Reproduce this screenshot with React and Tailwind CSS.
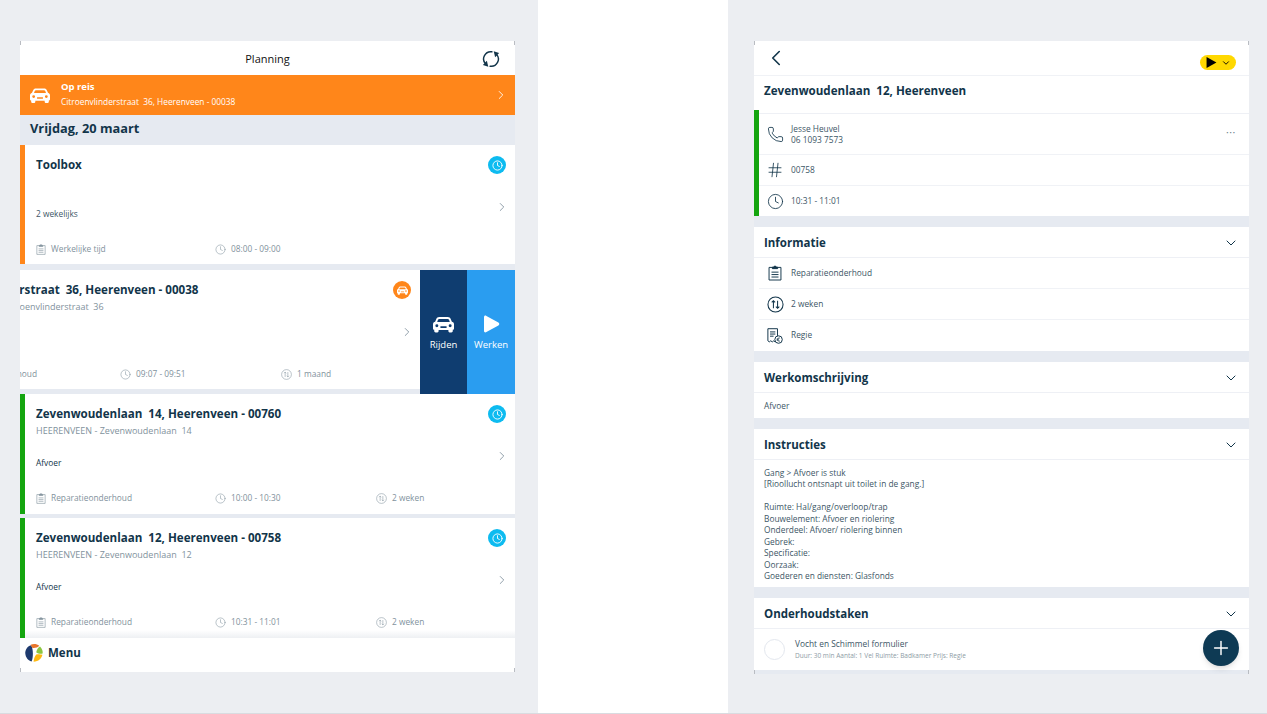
import { ChevronDown, ChevronLeft, ChevronRight, Clock, Hash, Phone, Plus } from "lucide-react";

const Car = ({ className }) => (
  <svg viewBox="0 0 24 18" className={className} fill="currentColor" fillRule="evenodd">
    <path d="M7 .5H17C18.5.5 19.6 1.3 20.2 2.6L21.6 5.8L23 6.5C23.6 7 24 7.8 24 8.6V13.5C24 14.3 23.5 15 22.6 15V16.5C22.6 17.3 22 18 21 18H19C18.2 18 17.6 17.3 17.6 16.5V15.2H6.4V16.5C6.4 17.3 5.8 18 5 18H3C2 18 1.4 17.3 1.4 16.5V15C.5 15 0 14.3 0 13.5V8.6C0 7.8.4 7 1 6.5L2.4 5.8L3.8 2.6C4.4 1.3 5.5.5 7 .5ZM7.2 2.6H16.8C17.5 2.6 18 3 18.3 3.6L19.2 6H4.8L5.7 3.6C6 3 6.5 2.6 7.2 2.6ZM4.4 8.6A1.7 1.7 0 1 0 4.4 12A1.7 1.7 0 1 0 4.4 8.6ZM19.6 8.6A1.7 1.7 0 1 0 19.6 12A1.7 1.7 0 1 0 19.6 8.6ZM8.5 11H15.5V13H8.5Z" />
  </svg>
);

const Sync = ({ className }) => (
  <svg viewBox="0 0 20 20" className={className} fill="none" stroke="currentColor" strokeWidth="1.6" strokeLinecap="round">
    <path d="M11 2A8 8 0 0 0 4 15.4" />
    <path d="M9 18A8 8 0 0 0 16 4.6" />
    <path d="M13 1.4L19 3.4L14.6 8Z" fill="currentColor" stroke="none" />
    <path d="M7 18.6L1 16.6L5.4 12Z" fill="currentColor" stroke="none" />
  </svg>
);

const Clipboard = ({ className, sw = 1.3 }) => (
  <svg viewBox="0 0 16 18" className={className} fill="none" stroke="currentColor" strokeWidth={sw}>
    <path d="M5 2.6H1.2V17H14.8V2.6H11" />
    <path d="M5 4V2.2H6.8C6.9 .6 9.1 .6 9.2 2.2H11V4Z" fill="currentColor" />
    <path d="M4 8H12M4 10.8H12M4 13.6H12" />
  </svg>
);

const Interval = ({ className, sw = 1.1 }) => (
  <svg viewBox="0 0 18 18" className={className} fill="none" stroke="currentColor" strokeWidth={sw}>
    <circle cx="9" cy="9" r="8" />
    <path d="M6.8 13V5M5 6.8L6.8 5L8.6 6.8M11.2 5V13M9.4 11.2L11.2 13L13 11.2" />
  </svg>
);

const Receipt = ({ className }) => (
  <svg viewBox="0 0 18 18" className={className} fill="none" stroke="currentColor" strokeWidth="1.1">
    <path d="M9 15.5L7.6 14.4L6 15.6L4.2 14.4L2.6 15.6L1 14.4V.8H11.8V9" />
    <path d="M3.4 4.4H9.4M3.4 6.8H9.4M3.4 9.2H7.4" />
    <circle cx="13" cy="13" r="4.2" fill="#fff" />
    <path d="M14.6 11.4C13 10.6 11.8 11.6 11.8 13C11.8 14.4 13 15.4 14.6 14.6M10.8 12.4H13.4M10.8 13.6H13.4" strokeWidth=".8" />
  </svg>
);

const Logo = () => (
  <svg viewBox="0 0 18 18" className="w-[18px] h-[18px]">
    <path d="M6.2 1.2C1.8 2.4 0 6.4.3 9.6C.6 13.2 2.8 16.6 6.6 17.4C8.4 13.8 8.4 5.4 6.2 1.2Z" fill="#1e3a6e" />
    <path d="M5.6.8C8.4-.4 12-.2 14.2 1.8C12.8 3.6 9.4 4.4 7.2 3.8C6.6 3 6.2 1.8 5.6.8Z" fill="#e8762c" />
    <path d="M15 2.4C17.2 4.4 18 7.4 17.6 9.6C15.6 10.2 12.8 9.6 11.2 8.2C11.8 5.8 13 3.4 15 2.4Z" fill="#8cc63f" />
    <path d="M17.4 10.8C16.8 14.4 13.4 17.6 8.6 17.8C8.8 15.6 9.4 12.8 11.2 10.6C13 10 15.6 10 17.4 10.8Z" fill="#fdb913" />
  </svg>
);

// small grey ticks left by the screen's rounded corners
const Corners = () => (
  <>
    <span className="absolute left-0 top-0 w-px h-[4px] bg-[#b9bcc2]" />
    <span className="absolute right-0 top-0 w-px h-[4px] bg-[#b9bcc2]" />
    <span className="absolute left-0 bottom-0 w-px h-[4px] bg-[#b9bcc2]" />
    <span className="absolute right-0 bottom-0 w-px h-[4px] bg-[#b9bcc2]" />
  </>
);

const MetaItem = ({ icon, text, className }) => (
  <div className={`flex items-center gap-[5px] text-[8.35px] text-[#82929d] ${className}`}>
    {icon}
    <span>{text}</span>
  </div>
);

const WorkCard = ({ bar, title, sub, desc, descColor, badge, items, height }) => (
  <div className={`w-[495px] shrink-0 bg-white border-l-[5px] pl-[11px] pr-[9px] pt-[11px] flex flex-col ${bar} ${height}`}>
    <div className="flex items-center justify-between h-[18px]">
      <span className="text-[11.6px] font-bold text-[#12354a] whitespace-pre">{title}</span>
      {badge}
    </div>
    <div className="h-[14px] mt-[1px] leading-[14px] text-[9px] text-[#82929d] whitespace-pre">{sub}</div>
    <div className="flex justify-between h-[32px] mt-[12px]">
      <span className={`text-[8.35px] pt-[7px] leading-[12px] ${descColor}`}>{desc}</span>
      <ChevronRight className="w-[14px] h-[14px] text-[#6f8290] -mr-[3px] -mt-[1px]" strokeWidth={1.3} />
    </div>
    <div className="flex items-center mt-[10px]">{items}</div>
  </div>
);

const ClockBadge = () => (
  <span className="w-[18px] h-[18px] rounded-full bg-[#0dbbf0] flex items-center justify-center text-white">
    <Clock className="w-[11px] h-[11px]" strokeWidth={2} />
  </span>
);

const CarBadge = () => (
  <span className="w-[18px] h-[18px] rounded-full bg-[#ff861a] flex items-center justify-center text-white">
    <Car className="w-[11px] h-[9px]" />
  </span>
);

const metaClock = <Clock className="w-[11px] h-[11px]" strokeWidth={1.2} />;
const metaClip = <Clipboard className="w-[10px] h-[11px]" sw={1} />;
const metaInt = <Interval className="w-[11px] h-[11px]" sw={0.9} />;

const metaRow = (type, time, freq) => (
  <>
    <MetaItem icon={metaClip} text={type} className="w-[179px]" />
    <MetaItem icon={metaClock} text={time} className="w-[161px]" />
    {freq && <MetaItem icon={metaInt} text={freq} />}
  </>
);

const DetailRow = ({ icon, children, height, border = true }) => (
  <div className={`flex items-center pl-[5px] ${height} ${border ? "border-b border-[#f0f2f6]" : ""}`}>
    <span className="w-[22px] flex justify-center text-[#12354a] mr-[5px]">{icon}</span>
    {children}
  </div>
);

const SectionHead = ({ title }) => (
  <div className="flex items-center justify-between h-[31px] pl-[10px] pr-[10px] pt-[1px] border-b border-[#eef0f5]">
    <span className="text-[11.5px] font-bold text-[#12354a]">{title}</span>
    <ChevronDown className="w-[16px] h-[16px] text-[#12354a]" strokeWidth={1.5} />
  </div>
);

const instructies = [
  "Gang > Afvoer is stuk",
  "[Rioollucht ontsnapt uit toilet in de gang.]",
  "\u00a0",
  "Ruimte: Hal/gang/overloop/trap",
  "Bouwelement: Afvoer en riolering",
  "Onderdeel: Afvoer/ riolering binnen",
  "Gebrek:",
  "Specificatie:",
  "Oorzaak:",
  "Goederen en diensten: Glasfonds",
];

const App = () => {
  return (
    <div className="relative w-[1267px] h-[714px] overflow-hidden bg-[#eceef2] border-b border-[#d9dbe0] flex font-['Open_Sans',sans-serif]">
      {/* Planning list */}
      <div className="relative w-[495px] h-[631px] ml-[20px] mt-[41px] shrink-0 bg-[#e6eaf1] flex flex-col overflow-hidden">
        <div className="relative h-[34px] shrink-0 bg-white flex items-center justify-center">
          <span className="text-[11px] font-medium text-[#111] pt-[2px]">Planning</span>
          <Sync className="absolute right-[15px] top-[9px] w-[18px] h-[18px] text-[#12354a]" />
        </div>

        <div className="h-[40px] shrink-0 bg-[#ff861a] text-white flex items-center pl-[10px] pr-[7px]">
          <Car className="w-[20px] h-[15px]" />
          <div className="ml-[11px] flex-1 pb-[2px]">
            <div className="text-[9.5px] font-bold leading-[14px]">Op reis</div>
            <div className="text-[8.35px] leading-[15px] whitespace-pre">Citroenvlinderstraat  36, Heerenveen - 00038</div>
          </div>
          <ChevronRight className="w-[14px] h-[14px]" strokeWidth={1.5} />
        </div>

        <div className="h-[30px] shrink-0 flex items-center pl-[10px] pb-[2px] text-[12.8px] font-bold text-[#12354a]">
          Vrijdag, 20 maart
        </div>

        <WorkCard
          bar="border-[#ff861a]"
          height="h-[119px]"
          title="Toolbox"
          sub=" "
          desc="2 wekelijks"
          descColor="text-[#3c5666]"
          badge={<ClockBadge />}
          items={metaRow("Werkelijke tijd", "08:00 - 09:00")}
        />

        <div className="flex h-[130px] shrink-0 pt-[6px]">
          <div className="-ml-[95px]">
            <WorkCard
              bar="border-[#14a50f]"
              height="h-[119px]"
              title="Citroenvlinderstraat  36, Heerenveen - 00038"
              sub="HEERENVEEN - Citroenvlinderstraat  36"
              desc="Afvoer"
              descColor="text-[#12354a]"
              badge={<CarBadge />}
              items={metaRow("Reparatieonderhoud", "09:07 - 09:51", "1 maand")}
            />
          </div>
          <div className="w-[47px] h-[124px] shrink-0 pt-[4px] bg-[#0f3d70] text-white flex flex-col items-center justify-center gap-[5px] text-[9.5px]">
            <Car className="w-[21px] h-[17px]" />
            <span>Rijden</span>
          </div>
          <div className="w-[48px] h-[124px] shrink-0 pt-[4px] bg-[#2a9df0] text-white flex flex-col items-center justify-center gap-[5px] text-[9.5px]">
            <svg viewBox="0 0 18 18" className="w-[18px] h-[18px]" fill="currentColor">
              <path d="M2 2.2C2 .8 3.2.2 4.4.9L16.4 7.6C17.6 8.3 17.6 9.7 16.4 10.4L4.4 17.1C3.2 17.8 2 17.2 2 15.8Z" />
            </svg>
            <span>Werken</span>
          </div>
        </div>

        <WorkCard
          bar="border-[#14a50f]"
          height="h-[120px]"
          title="Zevenwoudenlaan  14, Heerenveen - 00760"
          sub="HEERENVEEN - Zevenwoudenlaan  14"
          desc="Afvoer"
          descColor="text-[#12354a]"
          badge={<ClockBadge />}
          items={metaRow("Reparatieonderhoud", "10:00 - 10:30", "2 weken")}
        />

        <div className="mt-[4px]">
          <WorkCard
            bar="border-[#14a50f]"
            height="h-[120px]"
            title="Zevenwoudenlaan  12, Heerenveen - 00758"
            sub="HEERENVEEN - Zevenwoudenlaan  12"
            desc="Afvoer"
            descColor="text-[#12354a]"
            badge={<ClockBadge />}
            items={metaRow("Reparatieonderhoud", "10:31 - 11:01", "2 weken")}
          />
        </div>

        <div className="relative h-[34px] shrink-0 bg-white flex items-center pl-[5px] gap-[5px] pb-[7px] pt-[2px]">
          {/* soft fade over the list behind the menu bar */}
          <span className="absolute left-[5px] right-0 -top-[8px] h-[8px] bg-gradient-to-t from-[#eef0f3] to-transparent" />
          <Logo />
          <span className="text-[11.5px] font-bold text-[#12354a]">Menu</span>
        </div>
        <Corners />
      </div>

      {/* White gutter between the two screens */}
      <div className="w-[190px] h-[713px] ml-[23px] shrink-0 bg-white" />

      {/* Work order detail */}
      <div className="relative w-[495px] h-[633px] ml-[26px] mt-[41px] shrink-0 bg-[#e6eaf1] flex flex-col overflow-hidden">
        <div className="h-[35px] shrink-0 bg-white border-b border-[#f0f2f6] flex items-start justify-between pl-[9px] pr-[13px]">
          <ChevronLeft className="w-[26px] h-[26px] mt-[4px] text-[#12354a]" strokeWidth={1.5} />
          <div className="mt-[14px] w-[36px] h-[15px] rounded-full bg-[#ffd800] flex items-center pl-[6px] gap-[4px]">
            <svg viewBox="0 0 10 10" className="w-[11px] h-[11px]"><path d="M.5 0L9.5 5L.5 10Z" fill="#000" /></svg>
            <ChevronDown className="w-[10px] h-[10px] text-black" strokeWidth={2.2} />
          </div>
        </div>

        <div className="h-[34px] shrink-0 bg-white flex items-center pl-[10px] pb-[5px] text-[11.6px] font-bold text-[#12354a] whitespace-pre">
          Zevenwoudenlaan  12, Heerenveen
        </div>

        <div className="shrink-0 bg-white border-l-[5px] border-[#14a50f] pt-[3px] text-[8.35px] text-[#3c5666]">
          <div className="border-t border-[#eef0f5]">
            <DetailRow height="h-[41px]" icon={<Phone className="w-[17px] h-[17px]" strokeWidth={1.2} />}>
              <div className="flex-1 leading-[11.5px]">
                <div>Jesse Heuvel</div>
                <div>06 1093 7573</div>
              </div>
              <span className="mr-[13px] mb-[2px] text-[6px] text-[#6d7f8b] tracking-[1px]">•••</span>
            </DetailRow>
          </div>
          <DetailRow height="h-[31px]" icon={<Hash className="w-[18px] h-[18px]" strokeWidth={1.1} />}>
            <span>00758</span>
          </DetailRow>
          <DetailRow height="h-[30px]" border={false} icon={<Clock className="w-[17px] h-[17px]" strokeWidth={1.2} />}>
            <span>10:31 - 11:01</span>
          </DetailRow>
        </div>

        <div className="mt-[11px] shrink-0 bg-white text-[8.35px] text-[#3c5666]">
          <SectionHead title="Informatie" />
          <div className="pl-[5px]">
            <DetailRow height="h-[31px]" icon={<Clipboard className="w-[14px] h-[16px]" sw={1.1} />}>
              <span>Reparatieonderhoud</span>
            </DetailRow>
            <DetailRow height="h-[31px]" icon={<Interval className="w-[17px] h-[17px]" />}>
              <span>2 weken</span>
            </DetailRow>
            <DetailRow height="h-[31px]" border={false} icon={<Receipt className="w-[16px] h-[16px]" />}>
              <span>Regie</span>
            </DetailRow>
          </div>
        </div>

        <div className="mt-[11px] shrink-0 bg-white text-[8.35px] text-[#3c5666]">
          <SectionHead title="Werkomschrijving" />
          <div className="h-[25px] flex items-center pl-[10px] pt-[1px]">Afvoer</div>
        </div>

        <div className="mt-[11px] shrink-0 bg-white text-[8.35px] text-[#3c5666]">
          <SectionHead title="Instructies" />
          <div className="h-[127px] pl-[10px] pt-[7px] leading-[11.45px]">
            {instructies.map((line, i) => (
              <div key={i}>{line}</div>
            ))}
          </div>
        </div>

        <div className="mt-[11px] shrink-0 bg-white">
          <SectionHead title="Onderhoudstaken" />
          <div className="h-[41px] flex items-center pl-[10px]">
            <span className="w-[21px] h-[21px] rounded-full border border-[#e3e7ee]" />
            <div className="ml-[10px]">
              <div className="text-[8.35px] text-[#3c5666] leading-[12px]">Vocht en Schimmel formulier</div>
              <div className="text-[6.5px] text-[#8d9ba5] leading-[11px]">Duur: 30 min Aantal: 1 Vel Ruimte: Badkamer Prijs: Regie</div>
            </div>
          </div>
        </div>

        {/* Floating add button */}
        <button className="absolute right-[10px] bottom-[8px] w-[36px] h-[36px] rounded-full bg-[#0e3a54] shadow-md flex items-center justify-center text-white">
          <Plus className="w-[22px] h-[22px]" strokeWidth={1.6} />
        </button>
        <Corners />
      </div>
    </div>
  );
};

export default App;
